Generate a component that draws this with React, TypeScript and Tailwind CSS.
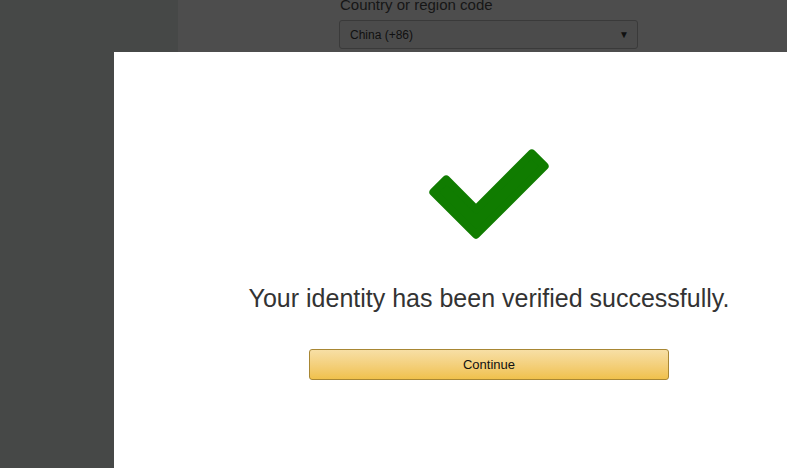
import React from 'react';

function CheckMark() {
  return (
    <svg width="130" height="100" viewBox="423 143 130 100" className="block">
      <polygon
        points="432.4,192.2 445.2,179.4 475,209.3 530.8,153.4 543.6,166.2 475,234.7"
        fill="#107c00"
        stroke="#107c00"
        strokeWidth="8"
        strokeLinejoin="round"
      />
    </svg>
  );
}

export default function App() {
  return (
    <div className="relative flex h-[468px] w-full overflow-hidden bg-[#4d4d4d] font-['Liberation_Sans',Arial,sans-serif]">
      {/* page behind the dimmed overlay */}
      <div className="w-[178px] shrink-0 bg-[#464847]" />
      <div className="flex-1 pl-[161px] pt-0">
        <div className="-mt-[5px] pl-[1px] text-[15px] leading-[20px] text-[#161616]">Country or region code</div>
        <div className="mt-[5px] flex h-[29px] w-[299px] items-center justify-between rounded-[3px] border border-[#3a3a3a] bg-[#4b4b4b] pl-[10px] pr-[8px] text-[12px] text-[#101010]">
          <span>China (+86)</span>
          <span className="text-[10px]">▼</span>
        </div>
      </div>

      {/* modal */}
      <div className="absolute left-[114px] top-[52px] flex h-[500px] w-[750px] flex-col items-center bg-white">
        <div className="mt-[91px]">
          <CheckMark />
        </div>
        <p className="mt-[40px] text-[25px] leading-[30px] text-[#333]">
          Your identity has been verified successfully.
        </p>
        <button className="mt-[36px] h-[31px] w-[360px] rounded-[3px] border border-[#a88734] bg-gradient-to-b from-[#f7dfa5] to-[#f0c14b] text-[13px] text-[#111]">
          Continue
        </button>
      </div>
    </div>
  );
}
